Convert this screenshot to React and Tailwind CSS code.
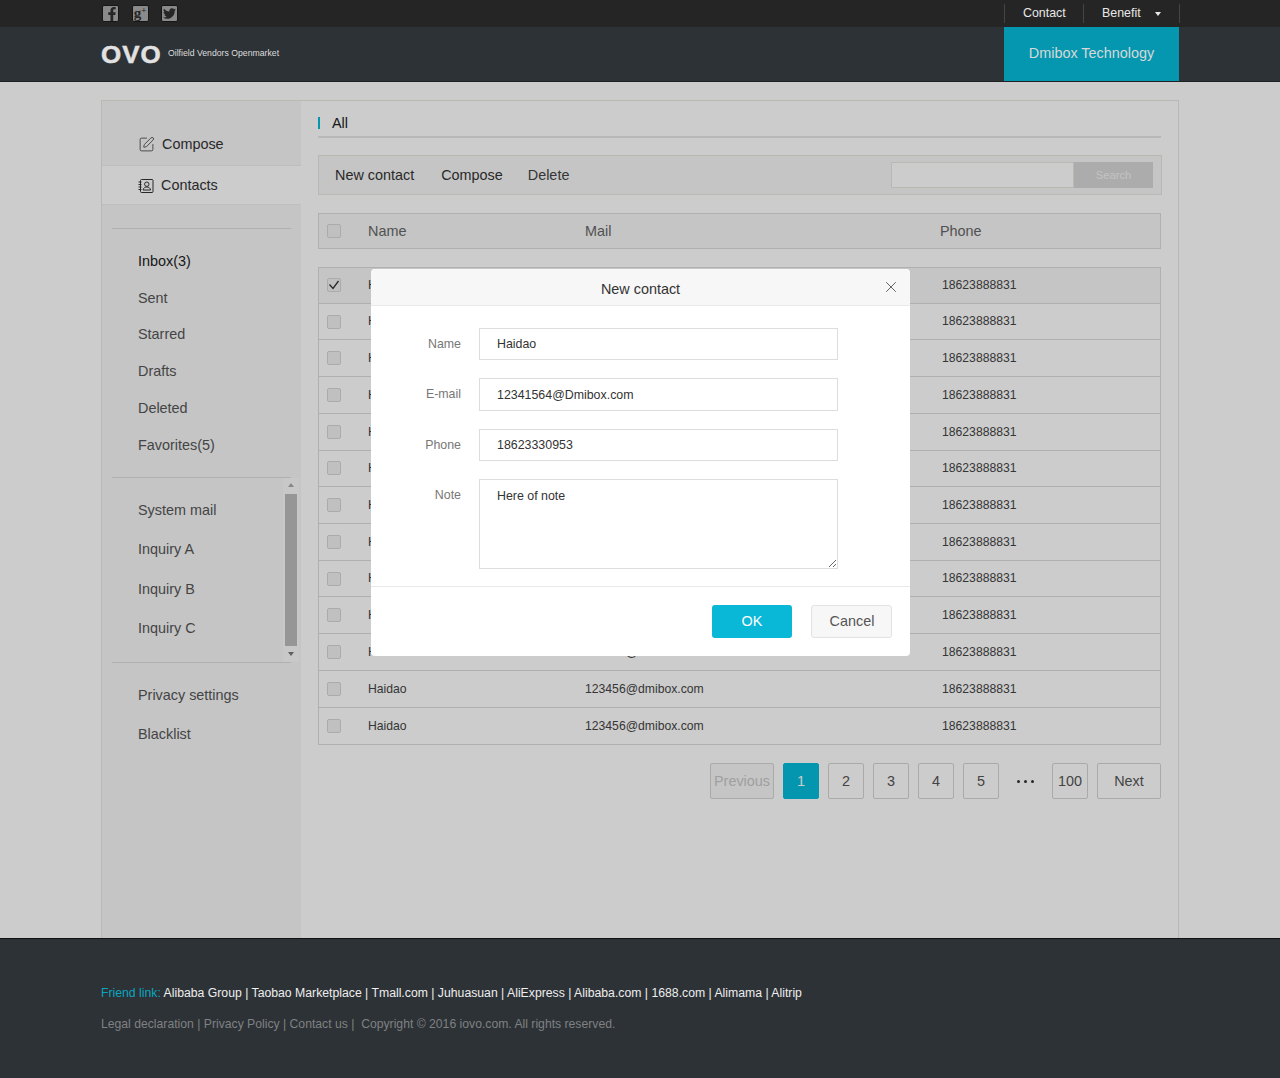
import React from "react";
import { FaFacebookF, FaTwitter } from "react-icons/fa";
import { SquarePen, X } from "lucide-react";

function Social({ children }) {
  return (
    <div className="flex h-[17px] w-[17px] items-end justify-center overflow-hidden rounded-[2px] border border-[#161616] bg-[#8a8a8a] text-[#262626]">
      {children}
    </div>
  );
}

function Check({ checked }) {
  return (
    <div className="flex h-[14px] w-[14px] shrink-0 items-center justify-center rounded-[2px] border border-[#d6d6d6] bg-[#f1f1f1]">
      {checked && (
        <svg width="12" height="12" viewBox="0 0 12 12" fill="none" stroke="#333" strokeWidth="1.3">
          <path d="M1.5 5.5 L5 9.5 L10.5 2" />
        </svg>
      )}
    </div>
  );
}

function Row({ selected, last, first }) {
  return (
    <div className={`flex items-center text-[12.2px] text-[#444] ${first ? "h-[35.7px]" : "h-[36.72px]"} ${last ? "" : "border-b border-[#dcdcdc]"} ${selected ? "bg-[#f7f7f7]" : ""}`}>
      <div className="flex w-[49px] pl-[8px]"><Check checked={selected} /></div>
      <div className="w-[217px]">Haidao</div>
      <div className="w-[357px]">123456@dmibox.com</div>
      <div>18623888831</div>
    </div>
  );
}

function SideItem({ children, h, dark }) {
  return <div className={`flex items-center pl-[36px] text-[14.4px] ${h} ${dark ? "text-[#222]" : "text-[#555]"}`}>{children}</div>;
}

function Field({ label, value, className }) {
  return (
    <div className={`flex items-center ${className}`}>
      <div className="w-[90px] text-right text-[12.4px] text-[#777]">{label}</div>
      <input readOnly value={value} className="ml-[18px] h-full w-[359px] border border-[#dddddd] px-[17px] text-[12.4px] text-[#333] outline-none" />
    </div>
  );
}

function Page({ children, active, disabled, className }) {
  return (
    <div className={`flex h-[36px] items-center justify-center rounded-[2px] border text-[14.4px] ${active ? "border-[#06bcdb] bg-[#06bcdb] text-white" : disabled ? "border-[#d5d5d5] bg-[#f7f7f7] text-[#c8c8c8]" : "border-[#d5d5d5] text-[#555]"} ${className}`}>
      {children}
    </div>
  );
}

function ContactsIcon() {
  return (
    <svg width="16" height="16" viewBox="0 0 16 16" fill="none" stroke="#333" strokeWidth="1">
      <rect x="2.5" y="1.5" width="12.5" height="13" rx="1" />
      <path d="M0.5 4h3M0.5 6.5h3M0.5 9h3M0.5 11.5h3" />
      <circle cx="8.8" cy="6.2" r="2.2" />
      <path d="M5 12c0.4-2.2 2-3 3.8-3s3.4 0.8 3.8 3z" />
    </svg>
  );
}

const contentRows = Array.from({ length: 13 });

export default function App() {
  return (
    <div className="relative flex h-[1078px] w-full flex-col overflow-hidden bg-white font-['Liberation_Sans',Arial,sans-serif]">
      {/* top bar */}
      <div className="relative z-10 flex h-[27px] items-center bg-[#252525] pl-[102px] pr-[100px]">
        <div className="flex gap-[12.5px]">
          <Social><FaFacebookF size={14} className="translate-x-[1px]" /></Social>
          <Social>
            <span className="flex items-start font-['Liberation_Serif',serif] text-[15px] font-bold leading-[15px]">
              g<span className="text-[9px] leading-[9px]">+</span>
            </span>
          </Social>
          <Social><FaTwitter size={13} className="mb-[1px]" /></Social>
        </div>
        <div className="ml-auto flex h-[19px] items-center text-[12.4px] text-[#e8e8e8]">
          <div className="flex h-full w-[79px] items-center border-l border-[#444] pl-[18px]">Contact</div>
          <div className="flex h-full w-[97px] items-center border-x border-[#444] pl-[18px]">
            Benefit
            <span className="ml-[14px] h-0 w-0 border-x-[3.5px] border-t-[4px] border-x-transparent border-t-[#e8e8e8]" />
          </div>
        </div>
      </div>

      {/* header */}
      <div className="relative z-10 flex h-[55px] items-stretch border-b border-[#1e2022] bg-[#2d3236] pl-[101px] pr-[101px]">
        <div className="flex items-center pt-[1px]">
          <span className="inline-block w-[67px] origin-left scale-x-[1.08] text-[24px] font-bold tracking-[1px] text-[#e2e2e2] [-webkit-text-stroke:0.5px_#e2e2e2]">OVO</span>
          <span className="mt-[-1px] text-[8.7px] text-[#dddddd]">Oilfield Vendors Openmarket</span>
        </div>
        <div className="ml-auto flex w-[175px] items-center justify-center bg-[#0597af] text-[14.4px] text-[#d8d8d8]">Dmibox Technology</div>
      </div>

      {/* content */}
      <div className="flex-1 pl-[101px] pt-[18px]">
        <div className="flex h-full w-[1078px] border-x border-t border-[#e8e8e0]">
          {/* sidebar */}
          <div className="w-[199px] shrink-0 bg-[#f7f7f7]">
            <div className="flex h-[64px] items-center gap-[7px] pl-[36px] pt-[23px] text-[14.4px] text-[#333]">
              <SquarePen size={17} strokeWidth={1.1} />
              <span>Compose</span>
            </div>
            <div className="flex h-[40px] items-center gap-[7px] border-y border-[#eeeeee] bg-white pl-[36px] pt-[1px] text-[14.4px] text-[#333]">
              <ContactsIcon />
              <span>Contacts</span>
            </div>
            <div className="mx-[10px] mt-[23px] border-t border-[#dcdcdc]" />
            <div className="pb-[13px] pt-[14px]">
              <SideItem h="h-[36.9px]" dark>Inbox(3)</SideItem>
              <SideItem h="h-[36.9px]">Sent</SideItem>
              <SideItem h="h-[36.9px]">Starred</SideItem>
              <SideItem h="h-[36.9px]">Drafts</SideItem>
              <SideItem h="h-[36.9px]">Deleted</SideItem>
              <SideItem h="h-[36.9px]">Favorites(5)</SideItem>
            </div>
            <div className="mx-[10px] border-t border-[#dcdcdc]" />
            <div className="relative py-[13px]">
              <SideItem h="h-[39.3px]">System mail</SideItem>
              <SideItem h="h-[39.3px]">Inquiry A</SideItem>
              <SideItem h="h-[39.3px]">Inquiry B</SideItem>
              <SideItem h="h-[39.3px]">Inquiry C</SideItem>
              <div className="absolute right-[2px] top-0 flex h-full w-[16px] flex-col items-center bg-[#fafafa]">
                <span className="mt-[5px] h-0 w-0 border-x-[3.5px] border-b-[4px] border-x-transparent border-b-[#aaaaaa]" />
                <div className="mt-[7px] h-[152px] w-[12px] bg-[#bcbcbc]" />
                <span className="mt-[6px] h-0 w-0 border-x-[3.5px] border-t-[4px] border-x-transparent border-t-[#777]" />
              </div>
            </div>
            <div className="mx-[10px] border-t border-[#dcdcdc]" />
            <div className="pt-[14px]">
              <SideItem h="h-[39px]">Privacy settings</SideItem>
              <SideItem h="h-[39px]">Blacklist</SideItem>
            </div>
          </div>

          {/* main */}
          <div className="w-[860px] pl-[17px] pt-[14px]">
            <div className="flex h-[23px] w-[843px] items-start border-b-2 border-[#e6e6e6]">
              <span className="mt-[2px] h-[12px] w-[2px] bg-[#06bcdb]" />
              <span className="ml-[12px] text-[14.4px] leading-[17px] text-[#222]">All</span>
            </div>
            <div className="mt-[17px] flex h-[40px] w-[844px] items-center border border-[#e8e8e0] bg-[#f7f7f7] pl-[16px] pr-[8px] text-[14.4px] text-[#333]">
              <span className="pt-[2px]">New contact</span>
              <span className="ml-[27px] pt-[2px]">Compose</span>
              <span className="ml-[25px] pt-[2px] text-[#444]">Delete</span>
              <div className="ml-auto flex h-[26px]">
                <div className="w-[183px] border border-[#e8e8e0] bg-white" />
                <div className="flex w-[79px] items-center justify-center bg-[#d8d8d8] pt-[1px] text-[11.2px] text-[#f4f4f4]">Search</div>
              </div>
            </div>
            <div className="mt-[18px] flex h-[36px] w-[843px] items-center border border-[#dcdcdc] bg-[#f7f7f7] text-[14.4px] text-[#666]">
              <div className="flex w-[49px] pl-[8px]"><Check /></div>
              <div className="w-[217px] pt-[1px]">Name</div>
              <div className="w-[355px] pt-[1px]">Mail</div>
              <div className="pt-[1px]">Phone</div>
            </div>
            <div className="mt-[18px] w-[843px] border border-[#dcdcdc]">
              {contentRows.map((_, i) => (
                <Row key={i} first={i === 0} selected={i === 0} last={i === 12} />
              ))}
            </div>
            <div className="mt-[18px] flex w-[843px] items-center justify-end gap-[9px]">
              <Page disabled className="w-[64px]">Previous</Page>
              <Page active className="w-[36px]">1</Page>
              <Page className="w-[36px]">2</Page>
              <Page className="w-[36px]">3</Page>
              <Page className="w-[36px]">4</Page>
              <Page className="w-[36px]">5</Page>
              <div className="flex w-[35px] items-center justify-center gap-[4px]">
                <span className="h-[3px] w-[3px] rounded-full bg-[#333]" />
                <span className="h-[3px] w-[3px] rounded-full bg-[#333]" />
                <span className="h-[3px] w-[3px] rounded-full bg-[#333]" />
              </div>
              <Page className="w-[36px]">100</Page>
              <Page className="w-[64px]">Next</Page>
            </div>
          </div>
        </div>
      </div>

      {/* footer */}
      <div className="relative z-10 h-[140px] border-t border-[#111] bg-[#2d3236] pl-[101px] pt-[45px]">
        <div className="text-[12.24px] leading-[18px] text-[#eeeeee]">
          <span className="text-[#0ba5c0]">Friend link: </span>
          Alibaba Group | Taobao Marketplace | Tmall.com | Juhuasuan | AliExpress | Alibaba.com | 1688.com | Alimama | Alitrip
        </div>
        <div className="mt-[13px] text-[12.2px] leading-[18px] text-[#7f8183]">
          Legal declaration | Privacy Policy | Contact us |&nbsp; Copyright © 2016 iovo.com. All rights reserved.
        </div>
      </div>

      {/* overlay + dialog */}
      <div className="absolute inset-0 bg-black/20">
        <div className="absolute left-[371px] top-[269px] w-[539px] overflow-hidden rounded-[4px] bg-white">
          <div className="relative flex h-[37px] items-center justify-center border-b border-[#e9e9e9] bg-[#f7f7f7] pt-[6px] text-[14.4px] text-[#333]">
            New contact
            <X size={18} strokeWidth={1.1} className="absolute right-[10px] top-[9px] text-[#444]" />
          </div>
          <div className="pt-[22px]">
            <Field label="Name" value="Haidao" className="h-[32px]" />
            <Field label="E-mail" value="12341564@Dmibox.com" className="mt-[18px] h-[33px]" />
            <Field label="Phone" value="18623330953" className="mt-[18px] h-[32px]" />
            <div className="mt-[18px] flex items-start">
              <div className="w-[90px] pt-[7px] text-right text-[12.4px] text-[#777]">Note</div>
              <textarea readOnly value="Here of note" className="ml-[18px] block h-[90px] w-[359px] border border-[#dddddd] px-[17px] py-[7px] text-[12.4px] text-[#333] outline-none" />
            </div>
          </div>
          <div className="mt-[17px] flex h-[70px] justify-end gap-[19px] border-t border-[#e9e9e9] pr-[18px] pt-[18px]">
            <div className="flex h-[33px] w-[80px] items-center justify-center rounded-[3px] bg-[#09b7d7] pt-[1px] text-[14.4px] text-white">OK</div>
            <div className="flex h-[33px] w-[81px] items-center justify-center rounded-[3px] border border-[#e2e2e2] bg-[#f7f7f7] pl-[1px] pt-[1px] text-[14.4px] text-[#555]">Cancel</div>
          </div>
        </div>
      </div>
    </div>
  );
}
